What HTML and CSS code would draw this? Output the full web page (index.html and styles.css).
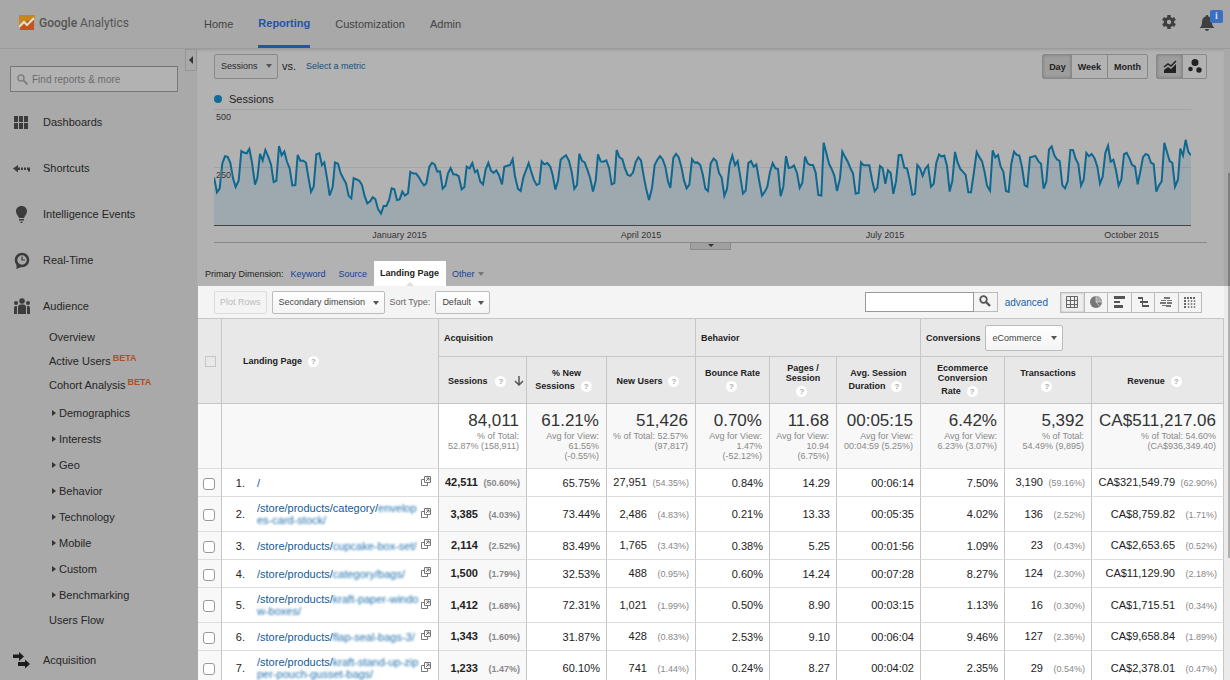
FILE: index.html
```html
<!DOCTYPE html>
<html lang="en">
  <head>
    <meta charset="UTF-8" />
    <meta name="viewport" content="width=device-width, initial-scale=1.0" />
    <title>Landing Pages - Google Analytics</title>
    <link rel="stylesheet" href="styles.css">
  </head>
  <body>
    <svg class="defs" aria-hidden="true">
      <symbol id="open" viewBox="0 0 10 10">
        <path d="M3.5 .5h6v6h-6z M3.5 3.5h-3v6h6v-3" fill="none" stroke="#777" />
        <path d="M5 5l3-3M5.5 2H8v2.500" fill="none" stroke="#666" />
      </symbol>
    </svg>

    <header>
      <a href="#" class="logo">
        <svg width="16" height="15" viewBox="0 0 16 15">
          <path d="M1 0h14v15H1z" fill="#c2541f" />
          <path d="M0 0h16v4l-4 4-3-3-5 5-4 3z" fill="#c8871b" />
          <path d="M0 12l5-5 3 3 7-7" fill="none" stroke="#ddd" stroke-width="2" />
        </svg>
        <span><b>Google</b> Analytics</span>
      </a>
      <nav class="top-nav">
        <a href="#">Home</a>
        <a href="#" class="active">Reporting</a>
        <a href="#">Customization</a>
        <a href="#">Admin</a>
      </nav>
      <div class="header-actions">
        <button aria-label="Settings">
          <svg width="14" height="14" viewBox="0 0 14 14">
            <circle cx="7" cy="7" r="3.700" fill="none" stroke="#3f3f3f" stroke-width="3" />
            <path d="M7 0v3M7 11v3M1 3.500l2.500 1.500M10.500 9l2.500 1.500M1 10.500L3.500 9M10.500 5L13 3.500" stroke="#3f3f3f" stroke-width="3.400" />
          </svg>
        </button>
        <button class="bell" aria-label="Notifications">
          <svg width="16" height="16" viewBox="0 0 16 16">
            <path d="M8 0c1 0 1.300.700 1.300 1.500C12 2.300 13 4.500 13 7c0 3 .500 4.500 2.500 6H.500C2.500 11.500 3 10 3 7c0-2.500 1-4.700 3.700-5.500C6.700.700 7 0 8 0zM6 14h4c0 1-1 2-2 2s-2-1-2-2z" fill="#3f3f3f" />
          </svg>
          <span class="badge">i</span>
        </button>
      </div>
    </header>

    <div class="layout">
      <aside>
        <button class="collapse" aria-label="Collapse menu"></button>
        <label class="find">
          <svg width="11" height="11" viewBox="0 0 11 11">
            <circle cx="4" cy="4" r="3" fill="none" stroke="#808080" stroke-width="1.500" />
            <path d="M6.500 6.500l4 4" stroke="#808080" stroke-width="2" />
          </svg>
          <input type="text" placeholder="Find reports &amp; more" aria-label="Find reports" />
        </label>

        <nav class="side-nav">
          <a href="#" class="item">
            <svg width="18" height="18" viewBox="0 0 18 18" fill="#3c3c3c">
              <path d="M1 3h4v6H1zM6 3h4v6H6zM11 3h4v6h-4zM1 10h4v6H1zM6 10h4v6H6zM11 10h4v6h-4z" />
            </svg>
            Dashboards
          </a>
          <a href="#" class="item">
            <svg width="18" height="18" viewBox="0 0 18 18" fill="#3c3c3c">
              <path d="M0 9.500L5 6v2.500h2v2.500H5v2.500zM8 8.500h2v2.500H8zM11 8.500h2v2.500h-2zM14 8.500h3v4h-2v-1.500h-1z" />
            </svg>
            Shortcuts
          </a>
          <a href="#" class="item">
            <svg width="18" height="18" viewBox="0 0 18 18" fill="#3c3c3c">
              <path d="M8.500 1C12 1 14 3.500 14 6.300c0 3-2 4.200-3 6.700H6c-1-2.500-3-3.700-3-6.700C3 3.500 5 1 8.500 1zM6 14h5v1.500H6zM7.500 16.500h2V18h-2z" />
            </svg>
            Intelligence Events
          </a>
          <a href="#" class="item">
            <svg width="18" height="18" viewBox="0 0 18 18">
              <path d="M3.500 13v5l6-2.500z" fill="#3c3c3c" />
              <circle cx="9" cy="9" r="6" fill="none" stroke="#3c3c3c" stroke-width="2.600" />
              <path d="M9 5.500V9h3" fill="none" stroke="#3c3c3c" stroke-width="1.200" />
            </svg>
            Real-Time
          </a>
          <a href="#" class="item">
            <svg width="18" height="18" viewBox="0 0 18 18" fill="#3c3c3c">
              <circle cx="9" cy="4" r="2.800" /><circle cx="3" cy="6" r="2" /><circle cx="15" cy="6" r="2" />
              <path d="M5 17V10c0-1.500 1-2.500 2.500-2.500h3c1.500 0 2.500 1 2.500 2.500v7zM1 17v-6c0-1.300.700-2 1.800-2H4v8zM14 17V9h1.200c1.100 0 1.800.700 1.800 2v6z" />
            </svg>
            Audience
          </a>
          <ul>
            <li><a href="#">Overview</a></li>
            <li><a href="#">Active Users</a><span class="beta">BETA</span></li>
            <li><a href="#">Cohort Analysis</a><span class="beta">BETA</span></li>
          </ul>
          <ul class="groups">
            <li><a href="#">Demographics</a></li>
            <li><a href="#">Interests</a></li>
            <li><a href="#">Geo</a></li>
            <li><a href="#">Behavior</a></li>
            <li><a href="#">Technology</a></li>
            <li><a href="#">Mobile</a></li>
            <li><a href="#">Custom</a></li>
            <li><a href="#">Benchmarking</a></li>
          </ul>
          <ul class="last">
            <li><a href="#">Users Flow</a></li>
          </ul>
          <a href="#" class="item">
            <svg width="18" height="18" viewBox="0 0 18 18" fill="#1c1c1c">
              <path d="M0 3.500h6V1l5 4.500L6 10V7H0zM5 11h7V8.500l5 4.500-5 4.500V15H5z" />
            </svg>
            Acquisition
          </a>
        </nav>
      </aside>

      <main>
        <section class="overview">
          <div class="metric-bar">
            <span class="select"><select aria-label="Metric"><option>Sessions</option></select></span>
            <span class="vs">vs.</span>
            <a href="#" class="select-metric">Select a metric</a>
            <div class="segmented">
              <button class="on">Day</button>
              <button>Week</button>
              <button>Month</button>
            </div>
            <div class="segmented icons">
              <button class="on" aria-label="Line chart">
                <svg width="14" height="14" viewBox="0 0 14 14">
                  <path d="M1 13V10l4-3 3 2 5-5v9z" fill="#222" />
                  <path d="M1 7l4-3 3 2 5-5" fill="none" stroke="#222" stroke-width="1.500" />
                </svg>
              </button>
              <button aria-label="Motion chart">
                <svg width="14" height="14" viewBox="0 0 14 14" fill="#222">
                  <circle cx="7" cy="3.500" r="3.500" /><circle cx="2.500" cy="10" r="2.300" /><circle cx="11" cy="11" r="2.700" />
                </svg>
              </button>
            </div>
          </div>

          <p class="legend">Sessions</p>
          <div class="chart">
            <span class="tick top">500</span>
            <span class="tick mid">250</span>
            <svg viewBox="0 0 2931 351" preserveAspectRatio="none">
              <path class="fill" d="M0 351L0 206 9 251 17 240 25 163 33 141 41 143 49 161 57 208 65 235 74 216 82 125 89 130 98 132 106 119 114 160 123 228 130 208 138 134 146 154 154 122 163 143 171 166 179 220 187 216 195 110 203 138 211 127 219 158 227 178 235 230 244 229 251 137 259 155 268 155 276 161 284 210 291 250 299 234 307 135 316 132 324 168 331 160 340 213 347 261 356 235 363 160 372 164 380 193 388 209 396 224 404 262 412 270 419 208 428 212 436 216 444 229 452 263 460 285 469 278 476 266 484 272 492 302 501 316 509 293 517 293 525 275 533 239 541 242 549 275 557 273 565 249 573 261 582 254 589 189 598 194 606 194 614 204 622 219 630 230 637 224 646 173 654 161 662 166 670 188 678 187 686 240 694 231 702 193 710 177 718 196 726 197 734 202 743 242 751 236 758 173 767 178 775 162 783 190 790 184 799 219 807 227 815 181 823 161 831 185 839 192 847 184 855 199 864 227 871 173 880 170 888 168 896 150 903 203 912 241 920 247 928 206 944 162 952 189 960 214 968 229 976 225 983 157 991 166 1000 162 1009 173 1016 198 1024 243 1032 216 1040 152 1048 144 1056 138 1065 155 1073 189 1081 241 1089 229 1096 134 1104 155 1112 160 1120 182 1128 206 1137 249 1145 216 1152 135 1160 157 1168 158 1177 154 1185 176 1193 227 1201 223 1208 122 1216 144 1225 150 1233 178 1241 198 1249 201 1257 191 1265 159 1273 144 1281 154 1289 201 1297 243 1305 275 1314 238 1322 168 1330 152 1338 141 1346 151 1354 173 1362 218 1369 238 1378 146 1386 134 1394 144 1402 173 1410 215 1418 239 1426 228 1434 150 1442 161 1450 160 1459 168 1467 200 1474 240 1482 247 1490 163 1499 148 1507 156 1515 192 1523 206 1531 262 1539 241 1547 166 1555 139 1563 168 1571 156 1579 204 1587 255 1595 246 1603 162 1611 156 1619 173 1627 166 1635 213 1644 261 1652 250 1660 234 1668 189 1676 162 1684 178 1692 180 1700 263 1708 234 1716 141 1724 177 1733 175 1740 169 1749 192 1757 238 1765 222 1773 142 1781 163 1789 168 1797 168 1805 191 1813 259 1822 261 1829 100 1837 131 1845 164 1853 180 1861 200 1869 247 1878 208 1885 127 1893 143 1901 157 1909 177 1917 193 1925 255 1934 253 1941 160 1949 169 1966 169 1974 213 1982 248 1990 237 1998 171 2006 178 2014 225 2022 184 2030 192 2038 256 2046 218 2054 138 2062 137 2071 176 2079 178 2087 213 2095 259 2103 256 2110 168 2118 178 2126 201 2134 179 2142 169 2151 234 2159 225 2167 161 2175 136 2183 142 2191 139 2199 171 2207 249 2215 216 2223 128 2231 161 2239 180 2247 189 2255 198 2263 251 2271 251 2280 188 2288 128 2296 144 2304 156 2312 190 2319 231 2328 246 2336 123 2344 145 2352 137 2360 173 2368 188 2376 247 2384 250 2392 163 2400 127 2408 137 2416 139 2424 174 2432 230 2440 234 2448 145 2464 140 2473 156 2481 164 2489 240 2497 218 2505 120 2513 111 2521 138 2529 151 2537 155 2545 229 2553 239 2561 218 2569 122 2577 122 2585 149 2593 165 2601 231 2609 213 2617 131 2625 141 2633 134 2642 148 2650 173 2658 225 2666 204 2674 131 2682 109 2690 158 2698 152 2706 184 2714 231 2722 213 2730 135 2738 131 2746 147 2754 167 2763 173 2771 227 2779 188 2787 144 2795 134 2803 138 2811 161 2819 165 2827 249 2835 230 2843 218 2851 100 2859 128 2867 156 2875 161 2883 234 2892 212 2899 118 2907 139 2915 91 2923 128 2931 138 2931 351z" />
              <polyline class="line" points="0 206 9 251 17 240 25 163 33 141 41 143 49 161 57 208 65 235 74 216 82 125 89 130 98 132 106 119 114 160 123 228 130 208 138 134 146 154 154 122 163 143 171 166 179 220 187 216 195 110 203 138 211 127 219 158 227 178 235 230 244 229 251 137 259 155 268 155 276 161 284 210 291 250 299 234 307 135 316 132 324 168 331 160 340 213 347 261 356 235 363 160 372 164 380 193 388 209 396 224 404 262 412 270 419 208 428 212 436 216 444 229 452 263 460 285 469 278 476 266 484 272 492 302 501 316 509 293 517 293 525 275 533 239 541 242 549 275 557 273 565 249 573 261 582 254 589 189 598 194 606 194 614 204 622 219 630 230 637 224 646 173 654 161 662 166 670 188 678 187 686 240 694 231 702 193 710 177 718 196 726 197 734 202 743 242 751 236 758 173 767 178 775 162 783 190 790 184 799 219 807 227 815 181 823 161 831 185 839 192 847 184 855 199 864 227 871 173 880 170 888 168 896 150 903 203 912 241 920 247 928 206 944 162 952 189 960 214 968 229 976 225 983 157 991 166 1000 162 1009 173 1016 198 1024 243 1032 216 1040 152 1048 144 1056 138 1065 155 1073 189 1081 241 1089 229 1096 134 1104 155 1112 160 1120 182 1128 206 1137 249 1145 216 1152 135 1160 157 1168 158 1177 154 1185 176 1193 227 1201 223 1208 122 1216 144 1225 150 1233 178 1241 198 1249 201 1257 191 1265 159 1273 144 1281 154 1289 201 1297 243 1305 275 1314 238 1322 168 1330 152 1338 141 1346 151 1354 173 1362 218 1369 238 1378 146 1386 134 1394 144 1402 173 1410 215 1418 239 1426 228 1434 150 1442 161 1450 160 1459 168 1467 200 1474 240 1482 247 1490 163 1499 148 1507 156 1515 192 1523 206 1531 262 1539 241 1547 166 1555 139 1563 168 1571 156 1579 204 1587 255 1595 246 1603 162 1611 156 1619 173 1627 166 1635 213 1644 261 1652 250 1660 234 1668 189 1676 162 1684 178 1692 180 1700 263 1708 234 1716 141 1724 177 1733 175 1740 169 1749 192 1757 238 1765 222 1773 142 1781 163 1789 168 1797 168 1805 191 1813 259 1822 261 1829 100 1837 131 1845 164 1853 180 1861 200 1869 247 1878 208 1885 127 1893 143 1901 157 1909 177 1917 193 1925 255 1934 253 1941 160 1949 169 1966 169 1974 213 1982 248 1990 237 1998 171 2006 178 2014 225 2022 184 2030 192 2038 256 2046 218 2054 138 2062 137 2071 176 2079 178 2087 213 2095 259 2103 256 2110 168 2118 178 2126 201 2134 179 2142 169 2151 234 2159 225 2167 161 2175 136 2183 142 2191 139 2199 171 2207 249 2215 216 2223 128 2231 161 2239 180 2247 189 2255 198 2263 251 2271 251 2280 188 2288 128 2296 144 2304 156 2312 190 2319 231 2328 246 2336 123 2344 145 2352 137 2360 173 2368 188 2376 247 2384 250 2392 163 2400 127 2408 137 2416 139 2424 174 2432 230 2440 234 2448 145 2464 140 2473 156 2481 164 2489 240 2497 218 2505 120 2513 111 2521 138 2529 151 2537 155 2545 229 2553 239 2561 218 2569 122 2577 122 2585 149 2593 165 2601 231 2609 213 2617 131 2625 141 2633 134 2642 148 2650 173 2658 225 2666 204 2674 131 2682 109 2690 158 2698 152 2706 184 2714 231 2722 213 2730 135 2738 131 2746 147 2754 167 2763 173 2771 227 2779 188 2787 144 2795 134 2803 138 2811 161 2819 165 2827 249 2835 230 2843 218 2851 100 2859 128 2867 156 2875 161 2883 234 2892 212 2899 118 2907 139 2915 91 2923 128 2931 138" />
            </svg>
          </div>
          <div class="months">
            <span>January 2015</span>
            <span>April 2015</span>
            <span>July 2015</span>
            <span>October 2015</span>
          </div>
          <div class="chart-end">
            <button class="arrow-down" aria-label="Annotations"></button>
          </div>

          <div class="dimensions">
            <span>Primary Dimension:</span>
            <a href="#">Keyword</a>
            <a href="#">Source</a>
            <a href="#" class="current">Landing Page</a>
            <a href="#" class="other">Other</a>
          </div>
        </section>

        <section class="report">
          <div class="toolbar">
            <button class="plot" disabled>Plot Rows</button>
            <span class="select"><select aria-label="Secondary dimension"><option>Secondary dimension</option></select></span>
            <label for="sort">Sort Type:</label>
            <span class="select"><select id="sort"><option>Default</option></select></span>
            <form class="search">
              <input type="text" aria-label="Search table" />
              <button type="button" aria-label="Search">
                <svg width="12" height="12" viewBox="0 0 12 12">
                  <circle cx="4.500" cy="4.500" r="3.300" fill="none" stroke="#555" stroke-width="1.800" />
                  <path d="M7 7l4 4" stroke="#555" stroke-width="2.400" />
                </svg>
              </button>
            </form>
            <a href="#" class="advanced">advanced</a>
            <div class="views">
              <button class="on" aria-label="Data">
                <svg width="14" height="14" viewBox="0 0 14 14"><path d="M1.500 1.500h11v11h-11zM1.500 5.500h11M1.500 9.500h11M5.500 1.500v11M9.500 1.500v11" fill="none" stroke="#666" /></svg>
              </button>
              <button aria-label="Percentage">
                <svg width="14" height="14" viewBox="0 0 14 14"><circle cx="7" cy="7" r="6" fill="#777" /><path d="M7 7V1a6 6 0 0 1 6 6z" fill="#aaa" /><path d="M7 1v6h6M7 7l4 4.500" fill="none" stroke="#ddd" stroke-width=".700" /></svg>
              </button>
              <button aria-label="Performance">
                <svg width="14" height="14" viewBox="0 0 14 14"><path d="M2 1h11v3H2zM2 6h6v2H2zM2 10h9v3H2z" fill="#555" /></svg>
              </button>
              <button aria-label="Comparison">
                <svg width="14" height="14" viewBox="0 0 14 14"><path d="M2 2h5v2H2zM4 6h4v2H4zM7 6h5v2H7zM7 10h6v2H7zM6 2h1v10H6z" fill="#555" /></svg>
              </button>
              <button aria-label="Term cloud">
                <svg width="14" height="14" viewBox="0 0 14 14"><path d="M5 2h6v2H5zM2 5h5v1H2zM8 5h5v1H8zM1 7h6v2H1zM8 7h5v2H8zM3 10h4v1H3zM7 10h5v2H7z" fill="#777" /></svg>
              </button>
              <button aria-label="Pivot">
                <svg width="14" height="14" viewBox="0 0 14 14"><path d="M1 3h12M1 6h2M1 9h2M1 12h2" stroke="#666" stroke-width="2" stroke-dasharray="2 1" /><path d="M5.500 5v8M8.500 5v8M11.500 5v8" stroke="#888" stroke-width="1.500" stroke-dasharray="2 1" /></svg>
              </button>
            </div>
          </div>

          <table>
            <colgroup>
              <col class="c-check" /><col />
              <col class="c-sessions" /><col class="c-new" /><col class="c-users" />
              <col class="c-bounce" /><col class="c-pages" /><col class="c-rate" />
              <col class="c-rate" /><col class="c-trans" /><col class="c-revenue" />
            </colgroup>
            <thead>
              <tr class="group-row">
                <th rowspan="2" class="check"><input type="checkbox" aria-label="Select all" disabled /></th>
                <th rowspan="2" class="page-head">Landing Page<span class="help">?</span></th>
                <th colspan="3">Acquisition</th>
                <th colspan="3">Behavior</th>
                <th colspan="3">
                  <div class="conversions">
                    <label for="goal">Conversions</label>
                    <span class="select big"><select id="goal"><option>eCommerce</option></select></span>
                  </div>
                </th>
              </tr>
              <tr class="head-row">
                <th>
                  <div class="sorted">Sessions<span class="help">?</span>
                    <svg width="10" height="10" viewBox="0 0 10 10"><path d="M5 0v9M1 5l4 4 4-4" fill="none" stroke="#555" stroke-width="1.500" /></svg>
                  </div>
                </th>
                <th>% New<br />Sessions<span class="help">?</span></th>
                <th>New Users<span class="help">?</span></th>
                <th>Bounce Rate<br /><span class="help alone">?</span></th>
                <th>Pages /<br />Session<br /><span class="help alone">?</span></th>
                <th>Avg. Session<br />Duration<span class="help">?</span></th>
                <th>Ecommerce<br />Conversion<br />Rate<span class="help">?</span></th>
                <th>Transactions<br /><span class="help alone">?</span></th>
                <th>Revenue<span class="help">?</span></th>
              </tr>
            </thead>
            <tbody>
              <tr class="totals">
                <td></td>
                <td></td>
                <td class="sort"><strong>84,011</strong>% of Total:<br />52.87% (158,911)</td>
                <td><strong>61.21%</strong>Avg for View:<br />61.55%<br />(-0.55%)</td>
                <td><strong>51,426</strong>% of Total: 52.57%<br />(97,817)</td>
                <td><strong>0.70%</strong>Avg for View:<br />1.47%<br />(-52.12%)</td>
                <td><strong>11.68</strong>Avg for View:<br />10.94<br />(6.75%)</td>
                <td><strong>00:05:15</strong>Avg for View:<br />00:04:59 (5.25%)</td>
                <td><strong>6.42%</strong>Avg for View:<br />6.23% (3.07%)</td>
                <td><strong>5,392</strong>% of Total:<br />54.49% (9,895)</td>
                <td><strong>CA$511,217.06</strong>% of Total: 54.60%<br />(CA$936,349.40)</td>
              </tr>
              <tr>
                <td class="check"><input type="checkbox" aria-label="Row 1" /></td>
                <td class="page"><div><span>1.</span><a href="#">/</a><svg><use href="#open" /></svg></div></td>
                <td class="sort">42,511<i>(50.60%)</i></td><td>65.75%</td><td>27,951<i>(54.35%)</i></td>
                <td>0.84%</td><td>14.29</td><td>00:06:14</td>
                <td>7.50%</td><td>3,190<i>(59.16%)</i></td><td>CA$321,549.79<i>(62.90%)</i></td>
              </tr>
              <tr>
                <td class="check"><input type="checkbox" aria-label="Row 2" /></td>
                <td class="page"><div><span>2.</span><a href="#">/store/products/category/<s>envelop</s><s>es-card-stock/</s></a><svg><use href="#open" /></svg></div></td>
                <td class="sort">3,385<i>(4.03%)</i></td><td>73.44%</td><td>2,486<i>(4.83%)</i></td>
                <td>0.21%</td><td>13.33</td><td>00:05:35</td>
                <td>4.02%</td><td>136<i>(2.52%)</i></td><td>CA$8,759.82<i>(1.71%)</i></td>
              </tr>
              <tr>
                <td class="check"><input type="checkbox" aria-label="Row 3" /></td>
                <td class="page"><div><span>3.</span><a href="#">/store/products/<s>cupcake-box-set/</s></a><svg><use href="#open" /></svg></div></td>
                <td class="sort">2,114<i>(2.52%)</i></td><td>83.49%</td><td>1,765<i>(3.43%)</i></td>
                <td>0.38%</td><td>5.25</td><td>00:01:56</td>
                <td>1.09%</td><td>23<i>(0.43%)</i></td><td>CA$2,653.65<i>(0.52%)</i></td>
              </tr>
              <tr>
                <td class="check"><input type="checkbox" aria-label="Row 4" /></td>
                <td class="page"><div><span>4.</span><a href="#">/store/products/<s>category/bags/</s></a><svg><use href="#open" /></svg></div></td>
                <td class="sort">1,500<i>(1.79%)</i></td><td>32.53%</td><td>488<i>(0.95%)</i></td>
                <td>0.60%</td><td>14.24</td><td>00:07:28</td>
                <td>8.27%</td><td>124<i>(2.30%)</i></td><td>CA$11,129.90<i>(2.18%)</i></td>
              </tr>
              <tr>
                <td class="check"><input type="checkbox" aria-label="Row 5" /></td>
                <td class="page"><div><span>5.</span><a href="#">/store/products/<s>kraft-paper-windo</s><s>w-boxes/</s></a><svg><use href="#open" /></svg></div></td>
                <td class="sort">1,412<i>(1.68%)</i></td><td>72.31%</td><td>1,021<i>(1.99%)</i></td>
                <td>0.50%</td><td>8.90</td><td>00:03:15</td>
                <td>1.13%</td><td>16<i>(0.30%)</i></td><td>CA$1,715.51<i>(0.34%)</i></td>
              </tr>
              <tr>
                <td class="check"><input type="checkbox" aria-label="Row 6" /></td>
                <td class="page"><div><span>6.</span><a href="#">/store/products/<s>flap-seal-bags-3/</s></a><svg><use href="#open" /></svg></div></td>
                <td class="sort">1,343<i>(1.60%)</i></td><td>31.87%</td><td>428<i>(0.83%)</i></td>
                <td>2.53%</td><td>9.10</td><td>00:06:04</td>
                <td>9.46%</td><td>127<i>(2.36%)</i></td><td>CA$9,658.84<i>(1.89%)</i></td>
              </tr>
              <tr>
                <td class="check"><input type="checkbox" aria-label="Row 7" /></td>
                <td class="page"><div><span>7.</span><a href="#">/store/products/<s>kraft-stand-up-zip</s><s>per-pouch-gusset-bags/</s></a><svg><use href="#open" /></svg></div></td>
                <td class="sort">1,233<i>(1.47%)</i></td><td>60.10%</td><td>741<i>(1.44%)</i></td>
                <td>0.24%</td><td>8.27</td><td>00:04:02</td>
                <td>2.35%</td><td>29<i>(0.54%)</i></td><td>CA$2,378.01<i>(0.47%)</i></td>
              </tr>
            </tbody>
          </table>
        </section>
        <div class="scroll-thumb"></div>
      </main>
    </div>
  </body>
</html>
```

FILE: styles.css
```css
* {
  margin: 0;
  padding: 0;
  box-sizing: border-box;
}

body {
  height: 100vh;
  overflow: hidden;
  display: flex;
  flex-direction: column;
  background-color: #a9a9a9;
  color: #222;
  font-family: "Liberation Sans", Arial, sans-serif;
  font-size: 11px;
}

a {
  text-decoration: none;
  color: inherit;
}

button,
input,
select {
  font-family: inherit;
  font-size: 9px;
  color: inherit;
}

button {
  background: none;
  border: none;
  cursor: pointer;
}

ul {
  list-style: none;
}

.defs {
  position: absolute;
  width: 0;
  height: 0;
}

/* Header */
header {
  flex: none;
  height: 49px;
  display: flex;
  align-items: center;
  background-color: #a8a8a8;
  border-bottom: 1px solid #9b9b9b;
  padding: 0 15px 0 19px;
}

.logo {
  display: flex;
  align-items: center;
  gap: 4px;
  width: 185px;
  padding-bottom: 3px;
  font-family: Roboto, sans-serif;
  font-size: 12px;
  color: #555;
}

.logo b {
  font-weight: 500;
}

.top-nav {
  display: flex;
  gap: 25px;
  height: 48px;
  color: #444;
}

.top-nav a {
  line-height: 48px;
}

.top-nav .active {
  color: #2353ac;
  font-weight: bold;
  line-height: 46px;
  border-bottom: 3px solid #2353ac;
}

.header-actions {
  margin-left: auto;
  padding-bottom: 3px;
  display: flex;
  align-items: center;
  gap: 23px;
}

.bell {
  position: relative;
  width: 16px;
  height: 16px;
}

.badge {
  position: absolute;
  top: -5px;
  left: 11px;
  width: 13px;
  height: 13px;
  border-radius: 2px;
  background-color: #3b6fc4;
  color: #ddd;
  font: bold 10px/12px "Liberation Serif", serif;
}

/* Sidebar */
.layout {
  flex: 1;
  min-height: 0;
  display: flex;
}

aside {
  position: relative;
  flex: none;
  width: 197px;
  padding: 17px 19px 0 10px;
  color: #262626;
}

.collapse {
  position: absolute;
  top: 0;
  right: 0;
  width: 12px;
  height: 22px;
  border: 1px solid #959595;
}

.collapse::before {
  content: "";
  display: block;
  margin: 0 auto;
  width: 0;
  border: 4px solid transparent;
  border-left: 0;
  border-right-color: #333;
}

.find {
  display: flex;
  align-items: center;
  gap: 4px;
  height: 26px;
  padding-left: 6px;
  border: 1px solid #777;
  background-color: #b2b2b2;
}

.find input {
  flex: 1;
  min-width: 0;
  border: none;
  outline: none;
  background: none;
  font-size: 10px;
}

.find input::placeholder {
  color: #6c6c6c;
}

.side-nav {
  margin-top: 11px;
}

.item {
  display: flex;
  align-items: center;
  gap: 12px;
  height: 38px;
  margin-bottom: 8px;
  padding-left: 3px;
}

.item:last-child,
.item:nth-child(5) {
  margin-bottom: 0;
}

.side-nav ul {
  padding-left: 39px;
}

.side-nav li {
  display: flex;
  height: 24px;
  line-height: 24px;
}

.beta {
  margin: -3px 0 0 2px;
  color: #b0501a;
  font-size: 9px;
  font-weight: bold;
}

.side-nav .groups {
  padding: 3px 0 0 42px;
}

.groups li {
  height: 26px;
  line-height: 26px;
  align-items: center;
  gap: 3px;
}

.groups li::before {
  content: "";
  border: 3px solid transparent;
  border-left: 4px solid #333;
  border-right: 0;
}

.side-nav .last {
  margin-bottom: 9px;
}

/* Overview chart */
main {
  position: relative;
  flex: 1;
  min-width: 0;
}

.overview {
  padding: 5px 17px 0;
  background-color: #b2b2b2;
  border-right: 6px solid #a9a9a9;
  box-shadow: inset 0 3px 3px -2px #999;
}

.metric-bar {
  display: flex;
  align-items: center;
  height: 25px;
}

.select {
  position: relative;
  display: inline-flex;
}

.select select {
  appearance: none;
  height: 23px;
  padding: 0 18px 0 6px;
  border: 1px solid #bbb;
  border-radius: 2px;
  background: linear-gradient(#fff, #f4f4f4);
  color: #444;
}

.select::after {
  content: "";
  position: absolute;
  right: 6px;
  top: 10px;
  border: 3px solid transparent;
  border-top: 4px solid #555;
  border-bottom: 0;
}

.overview .select select {
  height: 25px;
  padding: 0 19px 2px 6px;
  border-color: #888;
  background: #b0b0b0;
  color: #2a2a2a;
}

.vs {
  margin: 0 10px 0 4px;
  padding-bottom: 2px;
}

.select-metric {
  padding-bottom: 2px;
  color: #10507f;
  font-size: 9px;
}

.segmented {
  display: flex;
  margin-left: auto;
  border: 1px solid #888;
  border-radius: 2px;
}

.segmented button {
  height: 23px;
  padding: 0 6px;
  font-weight: bold;
  border-left: 1px solid #888;
}

.segmented button:first-child {
  padding: 0 5px 0 6px;
  border-left: none;
}

.segmented .on {
  background-color: #9e9e9e;
  box-shadow: inset 0 0 3px #777;
}

.segmented.icons {
  margin-left: 8px;
}

.icons button {
  display: flex;
  align-items: center;
  padding: 0 4px 2px 5px;
}

.legend {
  display: flex;
  align-items: center;
  gap: 7px;
  height: 30px;
  padding-top: 10px;
}

.legend::before {
  content: "";
  width: 8px;
  height: 8px;
  border-radius: 50%;
  background-color: #0f6c98;
}

.chart {
  position: relative;
  height: 117px;
  margin-right: 16px;
  border-top: 1px solid #a4a4a4;
  border-bottom: 1px solid #444;
  background: linear-gradient(#a4a4a4, #a4a4a4) 0 57px / 100% 1px no-repeat;
}

.chart svg {
  display: block;
  width: 100%;
  height: 100%;
}

.tick {
  position: absolute;
  left: 2px;
  color: #333;
  font-size: 9px;
  line-height: 10px;
  text-shadow: 0 0 2px #b2b2b2, 0 0 2px #b2b2b2;
}

.tick.top {
  top: 2px;
}

.tick.mid {
  top: 60px;
}

.fill {
  fill: #0f6c98;
  fill-opacity: 0.13;
}

.line {
  fill: none;
  stroke: #0f6890;
  stroke-width: 2px;
  vector-effect: non-scaling-stroke;
}

/* one column per quarter, the last one runs past the chart edge */
.months {
  display: grid;
  grid-template-columns: 241fr 242fr 246fr 247fr;
  height: 16px;
  margin-right: -48px;
  padding-left: 65px;
  color: #333;
  font-size: 9px;
  line-height: 18px;
  text-align: center;
}

.chart-end {
  display: flex;
  justify-content: center;
  height: 19px;
  border-top: 1px solid #888;
}

.arrow-down {
  display: flex;
  justify-content: center;
  width: 41px;
  height: 7px;
  background-color: #a0a0a0;
  border: 1px solid #8c8c8c;
  border-top: none;
}

.arrow-down::before {
  content: "";
  margin-top: 1px;
  border: 3px solid transparent;
  border-top-color: #333;
  border-bottom: 0;
}

.dimensions {
  display: flex;
  align-items: center;
  height: 25px;
  margin-left: -9px;
  font-size: 9px;
}

.dimensions a {
  margin-left: 7px;
  color: #12409a;
}

.dimensions a + a {
  margin-left: 13px;
}

.dimensions .current {
  position: relative;
  margin-left: 7px;
  padding: 0 7px 0 6px;
  background-color: #fff;
  color: #222;
  font-weight: bold;
  line-height: 25px;
}

.current::after {
  content: "";
  position: absolute;
  bottom: 0;
  left: 50%;
  margin-left: -4px;
  border: 4px solid transparent;
  border-top: 0;
  border-bottom-color: #e0e0e0;
}

.dimensions .other {
  display: flex;
  align-items: center;
  gap: 3px;
  margin-left: 6px;
}

.other::after {
  content: "";
  border: 3px solid transparent;
  border-top: 4px solid #777;
  border-bottom: 0;
}

/* Report table */
.report {
  border-left: 1px solid #aaa;
  border-right: 6px solid #ebebeb;
  background-color: #f4f4f4;
}

.toolbar {
  display: flex;
  align-items: center;
  height: 32px;
  padding: 0 22px 0 16px;
  font-size: 9px;
  color: #666;
}

.plot {
  height: 23px;
  margin-right: 5px;
  padding: 0 5px;
  border: 1px solid #dcdcdc;
  border-radius: 2px;
  color: #bbb;
}

.toolbar label {
  margin: 0 5px;
}

.search {
  display: flex;
  margin-left: auto;
}

.search input {
  width: 109px;
  height: 20px;
  padding: 0 4px;
  border: 1px solid #999;
  background-color: #fff;
}

.search button {
  width: 24px;
  border: 1px solid #bbb;
  border-left: none;
}

.advanced {
  margin: 0 12px 0 7px;
  color: #1a63a5;
  font-size: 10px;
}

.views {
  display: flex;
  width: 142px;
  border: 1px solid #bbb;
}

.views button {
  flex: 1;
  display: flex;
  align-items: center;
  justify-content: center;
  height: 19px;
}

.views button + button {
  border-left: 1px solid #bbb;
}

.views .on {
  background-color: #eee;
  box-shadow: inset 0 0 2px #aaa;
}

table {
  width: 100%;
  table-layout: fixed;
  border-collapse: separate;
  border-spacing: 0;
  border-top: 1px solid #c6c6c6;
}

.c-check { width: 24px; }
.c-sessions { width: 88px; }
.c-new { width: 80px; }
.c-users { width: 89px; }
.c-bounce { width: 74px; }
.c-pages { width: 67px; }
.c-rate { width: 84px; }
.c-trans { width: 87px; }
.c-revenue { width: 132px; }

th {
  background-color: #e8e8e8;
  border-right: 1px solid #c6c6c6;
  border-bottom: 1px solid #c6c6c6;
  font-size: 9px;
  line-height: 10px;
}

.group-row th {
  height: 38px;
  padding-left: 5px;
  text-align: left;
}

.head-row th {
  height: 47px;
  padding-top: 2px;
}

.group-row .check {
  padding: 0;
}

.group-row .page-head {
  padding-left: 21px;
}

.conversions {
  display: flex;
  align-items: center;
  gap: 5px;
}

.select.big select {
  height: 26px;
  padding-right: 20px;
}

.select.big::after {
  top: 11px;
}

.help {
  display: inline-block;
  width: 11px;
  height: 11px;
  margin: 3px 6px;
  border-radius: 50%;
  background-color: #fff;
  color: #aaa;
  font-size: 8px;
  line-height: 11px;
  text-align: center;
  vertical-align: middle;
}

.help.alone {
  margin-left: 4px;
}

.sorted {
  display: flex;
  align-items: center;
  padding-left: 9px;
}

.sorted .help {
  margin: 0 8px;
}

td {
  height: 28px;
  padding: 5px 6px;
  background-color: #fff;
  border-right: 1px solid #c6c6c6;
  border-bottom: 1px solid #dcdcdc;
  text-align: right;
  line-height: 12px;
  white-space: nowrap;
}

td i {
  display: inline-block;
  width: 37px;
  margin-left: 5px;
  color: #888;
  font-size: 9px;
  font-style: normal;
}

td.sort {
  background-color: #f8f8f8;
  font-weight: bold;
}

.totals td {
  height: 65px;
  padding-right: 7px;
  background-color: #f8f8f8;
  color: #888;
  font-size: 9px;
  line-height: 10px;
  vertical-align: top;
}

.totals td.sort {
  background-color: #fff;
  font-weight: normal;
}

.totals strong {
  display: block;
  padding-top: 2px;
  color: #333;
  font-size: 17px;
  font-weight: normal;
  line-height: 20px;
}

td.check {
  padding: 0;
  background-color: #f8f8f8;
}

.check input {
  appearance: none;
  display: block;
  width: 12px;
  height: 12px;
  margin: 2px 0 0 5px;
  border: 1px solid #999;
  border-radius: 3px;
  background-color: #fff;
}

.check input:disabled {
  width: 11px;
  height: 11px;
  margin: 0 0 0 7px;
  border-color: #c6c6c6;
  border-radius: 0;
  background: none;
}

.page div {
  display: flex;
  align-items: center;
  text-align: left;
}

.page span {
  width: 17px;
  text-align: right;
}

.page a {
  width: 164px;
  margin-left: 12px;
  color: #155a94;
  white-space: normal;
  word-break: break-all;
}

/* masked part of the path */
.page s {
  color: #2272ad;
  text-decoration: none;
  filter: blur(1px);
}

.page svg {
  width: 10px;
  height: 10px;
  margin-top: -3px;
}

.scroll-thumb {
  position: absolute;
  top: 124px;
  right: 0;
  width: 2px;
  height: 385px;
  background-color: rgba(0, 0, 0, 0.25);
}
```
